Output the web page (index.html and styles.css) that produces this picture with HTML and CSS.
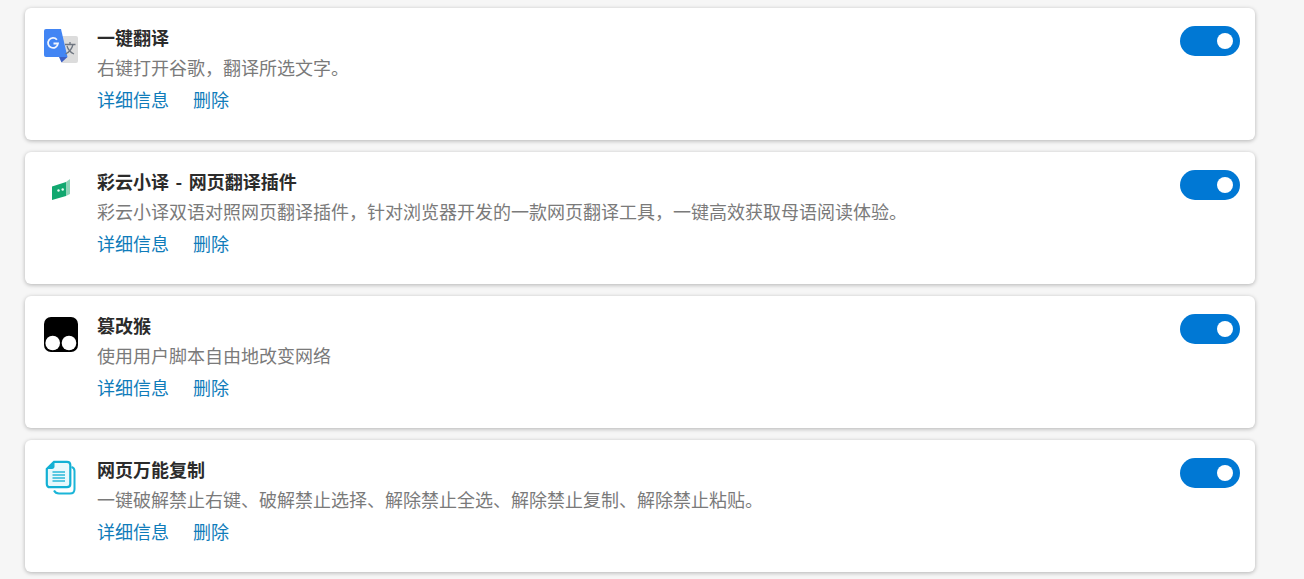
FILE: index.html
```html
<!DOCTYPE html>
<html lang="zh-CN">
<head>
<meta charset="utf-8">
<title>扩展</title>
<link rel="stylesheet" href="styles.css">
</head>
<body>
<main class="list">
  <section class="card">
    <svg class="icon" viewBox="0 0 36 36">
      <path d="M14 8h18a2 2 0 0 1 2 2v23a2 2 0 0 1-2 2H18z" fill="#dcdcdc"/>
      <path d="M2 1h15l6.500 28H2a2 2 0 0 1-2-2V3a2 2 0 0 1 2-2z" fill="#4285f4"/>
      <path d="M15 29h8.500l-6 5.500z" fill="#3c5fc4"/>
      <path d="M12.900 11.700A5 5 0 1 0 14 15.500H9.500" fill="none" stroke="#f1f5fe" stroke-width="1.800"/>
      <path d="M21 16.500h10.500M26 14v2.500M29 16.500c-1 4-3.500 7.500-7.500 9.500M23 18c1 3.500 3.500 6.500 7 8" fill="none" stroke="#6f7680" stroke-width="1.300"/>
    </svg>
    <div class="body">
      <h2 class="title">一键翻译</h2>
      <p class="desc">右键打开谷歌，翻译所选文字。</p>
      <div class="links"><a class="link">详细信息</a><a class="link">删除</a></div>
    </div>
    <div class="toggle"><span class="knob"></span></div>
  </section>
  <section class="card">
    <svg class="icon" viewBox="0 0 36 36">
      <path d="M8 14.500L22 10v14L8 28z" fill="#12a870"/>
      <path d="M22 10l4-3v15l-4 2z" fill="#8fd4b8"/>
      <circle cx="14.500" cy="18.500" r="1.200" fill="#e9fbf3"/>
      <circle cx="18.700" cy="17.500" r="1.200" fill="#e9fbf3"/>
    </svg>
    <div class="body">
      <h2 class="title">彩云小译 - 网页翻译插件</h2>
      <p class="desc">彩云小译双语对照网页翻译插件，针对浏览器开发的一款网页翻译工具，一键高效获取母语阅读体验。</p>
      <div class="links"><a class="link">详细信息</a><a class="link">删除</a></div>
    </div>
    <div class="toggle"><span class="knob"></span></div>
  </section>
  <section class="card">
    <svg class="icon" viewBox="0 0 36 36">
      <rect x="0" y="1" width="34" height="35" rx="7" fill="#000"/>
      <circle cx="8.700" cy="27" r="7.300" fill="#fff"/>
      <circle cx="25" cy="27" r="7.300" fill="#fff"/>
    </svg>
    <div class="body">
      <h2 class="title">篡改猴</h2>
      <p class="desc">使用用户脚本自由地改变网络</p>
      <div class="links"><a class="link">详细信息</a><a class="link">删除</a></div>
    </div>
    <div class="toggle"><span class="knob"></span></div>
  </section>
  <section class="card">
    <svg class="icon" viewBox="0 0 36 36">
      <path d="M27.500 7c2 .5 3 2 3 4v18c0 3-1.500 4.500-4.500 4.500H15c-2.500 0-4-1-5-3" fill="none" stroke="#1bb5d8" stroke-width="2"/>
      <path d="M10 1.800h13c2 0 3.300 1.200 3.300 3.200V24c0 2-1.300 3.200-3.300 3.200H6c-2 0-3.200-1.200-3.200-3.200V9z" fill="#e8f8fc" stroke="#12b0d4" stroke-width="2.200"/>
      <path d="M10.500 1.500v5c0 1.500-1 2.500-2.500 2.500H2.500z" fill="#12b0d4"/>
      <path d="M8.500 12h12.500M8.500 15h12.500M8.500 18h12.500M8.500 21h12.500" stroke="#2ab8d8" stroke-width="1.700"/>
    </svg>
    <div class="body">
      <h2 class="title">网页万能复制</h2>
      <p class="desc">一键破解禁止右键、破解禁止选择、解除禁止全选、解除禁止复制、解除禁止粘贴。</p>
      <div class="links"><a class="link">详细信息</a><a class="link">删除</a></div>
    </div>
    <div class="toggle"><span class="knob"></span></div>
  </section>
</main>
</body>
</html>
```
FILE: styles.css
```css
* { box-sizing: border-box; }
html, body { height: 100%; }
body {
  margin: 0;
  background: #f6f6f6;
  overflow: hidden;
  font-family: "Noto Sans CJK SC", "Liberation Sans", sans-serif;
}
.list {
  display: flex;
  flex-direction: column;
  gap: 12px;
  width: 1230px;
  margin-left: 25px;
  padding-top: 8px;
}
.card {
  display: flex;
  align-items: flex-start;
  height: 132px;
  padding: 14px 15px 0 19px;
  background: #fff;
  border-radius: 6px;
  box-shadow: 0 1px 4px rgba(0, 0, 0, 0.28);
}
.icon {
  flex: none;
  width: 36px;
  height: 36px;
  margin-top: 6px;
}
.body {
  flex: 1;
  margin-left: 17px;
}
.title {
  margin: 0;
  font-size: 18px;
  font-weight: 700;
  line-height: 30px;
  word-spacing: 2.5px;
  color: #2b2b2b;
}
.desc {
  margin: 0;
  font-size: 18px;
  line-height: 30px;
  color: #7a7a7a;
}
.links {
  display: flex;
  gap: 24px;
  margin-top: 2px;
}
.link {
  font-size: 18px;
  line-height: 30px;
  color: #0f7cba;
}
.toggle {
  flex: none;
  display: flex;
  align-items: center;
  justify-content: flex-end;
  width: 60px;
  height: 30px;
  margin-top: 4px;
  padding-right: 7px;
  border-radius: 15px;
  background: #0078d4;
}
.knob {
  width: 16px;
  height: 16px;
  border-radius: 50%;
  background: #fff;
}
```
